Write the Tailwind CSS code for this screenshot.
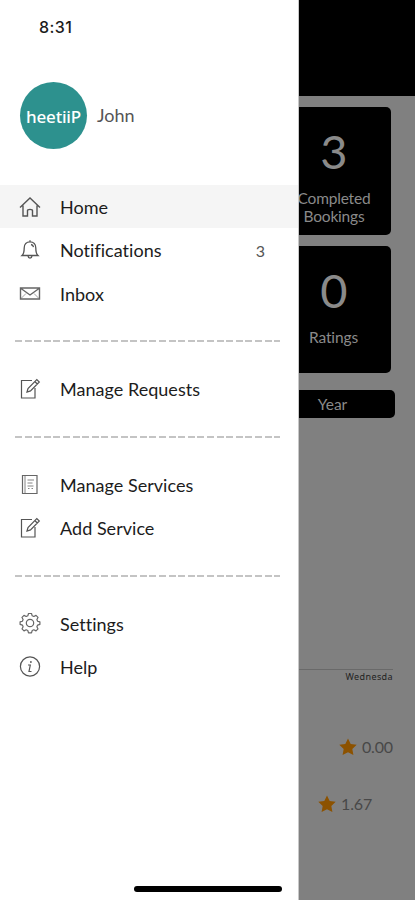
<!DOCTYPE html>
<html lang="en">
<head>
<meta charset="utf-8">
<title>Menu</title>
<script src="https://cdn.jsdelivr.net/npm/@tailwindcss/browser@4"></script>
</head>
<body class="w-[415px] h-[900px] overflow-hidden bg-[#808080] font-['Lato',sans-serif]">
<svg class="hidden">
  <symbol id="edit" viewBox="0 0 22 22"><path d="M13 2.500H2.500V20H16V10M8 14l1-3.500L17.800 1.500l2.500 2.500L11.500 12.900zM8 14l3.500-1.100M15.800 3.500l2.500 2.500"/></symbol>
</svg>
<div class="flex h-full">
  <aside class="w-[299px] shrink-0 h-full bg-white border-r border-[#c8c8c8] flex flex-col relative z-10 text-[#1c1c1c]">
    <div class="h-[54px] pl-[39px] pt-[15px] text-[16px] leading-6 font-medium tracking-[0.4px] font-['Inter',sans-serif]">8:31</div>
    <header class="h-[131px] pt-[29px] pl-[20px] flex items-start gap-[10px]">
      <div class="size-[67px] -mt-px rounded-full bg-[#2d918e] text-white flex items-center justify-center text-[17px] font-['Noto_Sans',sans-serif] font-medium tracking-[-0.2px] pt-[3px]">heetiiP</div>
      <span class="text-[18px] leading-[65px] text-[#555]">John</span>
    </header>
    <nav class="text-[18px] tracking-[0.03px]">
      <a class="h-[43px] pl-[19px] flex items-center gap-[19px] bg-[#f5f5f5]">
        <svg class="size-[22px]" viewBox="0 0 22 22" fill="none" stroke="#555" stroke-width="1.4"><path d="M1 11.500L11 2l10 9.500M4 9.500v10.500h4.500V14.500c0-1.500 5-1.500 5 0v5.500H18V9.500"/></svg>
        <span class="pt-[2px]">Home</span>
      </a>
      <a class="h-[44px] pl-[19px] pr-[33px] flex items-center gap-[19px]">
        <svg class="size-[22px]" viewBox="0 0 22 22" fill="none" stroke="#555" stroke-width="1.3"><path d="M3 16.500h16c-1.700-1.500-2.200-3-2.200-7.500 0-3.700-2.300-6.200-5.800-6.200S5.200 5.300 5.200 9c0 4.500-.5 6-2.200 7.500zM9 17c.3 2.700 3.700 2.700 4 0M11 1.300v1.500M12 5.500c1.500.3 2.300 1.300 2.500 2.700"/></svg>
        <span class="flex-1">Notifications</span><span class="text-[16px] text-[#555] pt-px">3</span>
      </a>
      <a class="h-[43px] pl-[19px] flex items-center gap-[19px]">
        <svg class="size-[22px]" viewBox="0 0 22 22" fill="none" stroke="#666" stroke-width="1.4"><path d="M1.500 5h19v11h-19zM2 5.500l9 6.500 9-6.500"/><path stroke-width=".6" d="M2 15.500l5-5M20 15.500l-5-5"/></svg>
        <span class="pt-px">Inbox</span>
      </a>
      <div class="mt-[25px] ml-[15px] w-[265px] h-[1.500px] bg-[repeating-linear-gradient(90deg,#c4c4c4_0_7px,transparent_7px_9.6px)]"></div>
      <a class="mt-[26px] h-[43px] pl-[19px] flex items-center gap-[19px]">
        <svg class="size-[22px]" fill="none" stroke="#555" stroke-width="1.2"><use href="#edit"/></svg>
        <span>Manage Requests</span>
      </a>
      <div class="mt-[25.500px] ml-[15px] w-[265px] h-[1.500px] bg-[repeating-linear-gradient(90deg,#c4c4c4_0_7px,transparent_7px_9.6px)]"></div>
      <a class="mt-[25.500px] h-[43px] pl-[19px] flex items-center gap-[19px]">
        <svg class="size-[22px]" viewBox="0 0 22 22" fill="none" stroke="#666" stroke-width="1.2"><path d="M3.500 1.500h14.500v18h-14.500z"/><path stroke-width=".8" d="M6 2v17M8.500 6h6.500M8.500 9h5M8.500 12h6M9 14.500h1.500M12.500 14.500h1.500"/></svg>
        <span class="pt-[2px]">Manage Services</span>
      </a>
      <a class="h-[43px] pl-[19px] flex items-center gap-[19px]">
        <svg class="size-[22px]" fill="none" stroke="#555" stroke-width="1.2"><use href="#edit"/></svg>
        <span class="pt-[2px]">Add Service</span>
      </a>
      <div class="mt-[26px] ml-[15px] w-[265px] h-[1.500px] bg-[repeating-linear-gradient(90deg,#c4c4c4_0_7px,transparent_7px_9.6px)]"></div>
      <a class="mt-[25px] h-[43px] pl-[19px] flex items-center gap-[19px]">
        <svg class="size-[22px]" viewBox="0 0 22 22" fill="none" stroke="#666" stroke-width="1.2" stroke-linejoin="round"><path d="M9.500 1.500h3l.7 2.300 1.600.7 2.200-1.100 2 2-1.100 2.200.7 1.600 2.300.7v2.500l-2.300.7-.7 1.600 1.100 2.200-2 2-2.200-1.100-1.600.7-.7 2.300h-3l-.7-2.300-1.600-.7L5 18.900l-2-2 1.100-2.200-.7-1.600-2.300-.7V9.900l2.300-.7.7-1.600L3 5.400l2-2 2.200 1.100 1.600-.7z"/><circle cx="11" cy="11" r="3.700"/></svg>
        <span class="pt-[2px]">Settings</span>
      </a>
      <a class="h-[44px] pl-[19px] flex items-center gap-[19px]">
        <svg class="size-[22px]" viewBox="0 0 22 22" fill="none" stroke="#555" stroke-width="1.2"><circle cx="11" cy="10.500" r="9.600"/><path d="M9 9h2.300L10 15.500h2.500"/><circle cx="11.900" cy="6" r=".9" fill="#555" stroke="none"/></svg>
        <span class="pt-[2px]">Help</span>
      </a>
    </nav>
    <div class="mt-auto mb-[8px] ml-[134px] w-[148px] h-[6px] rounded-full bg-black"></div>
  </aside>
  <main class="flex-1 min-w-0 bg-[#808080] text-[#8a8a8a] flex flex-col">
    <div class="h-[96px] bg-black shrink-0"></div>
    <section class="-ml-[24px] mt-[11px] w-[116px] h-[128px] shrink-0 rounded-[5px] bg-black flex flex-col items-center text-center">
      <div class="mt-[14px] pl-[2px] text-[47px] leading-[60px]">3</div>
      <div class="mt-[8px] pl-[2px] text-[15.500px] leading-[18px] tracking-[-0.2px]"><p>Completed</p><p>Bookings</p></div>
    </section>
    <section class="-ml-[24px] mt-[11px] w-[116px] h-[127px] shrink-0 rounded-[5px] bg-black flex flex-col items-center text-center">
      <div class="mt-[14px] pl-[2px] text-[47px] leading-[60px]">0</div>
      <div class="mt-[8px] pl-px text-[15.500px] leading-[18px] tracking-[-0.1px]">Ratings</div>
    </section>
    <div class="-ml-[29px] mt-[17px] w-[125px] h-[28px] shrink-0 rounded-[5px] bg-black text-center text-[15.500px] leading-[28px]">Year</div>
    <div class="mt-[251px] w-[94px] h-px shrink-0 bg-[#696969]"></div>
    <div class="pt-px w-[94px] text-right text-[9px] leading-3 tracking-[0.4px] text-[#222] font-['Noto_Sans',sans-serif]">Wednesda</div>
    <div class="mt-[53px] ml-[40px] h-[22px] flex items-center gap-[5px] text-[16px] text-[#484848]">
      <svg class="size-[18px]" viewBox="0 0 20 20" fill="#8c5200"><path d="M10 .5l3 6.200 6.700.9-4.900 4.700 1.200 6.700-6-3.300-6 3.300 1.200-6.700L.3 7.600 7 6.700z"/></svg>
      <span class="-mt-px tracking-[-0.2px]">0.00</span>
    </div>
    <div class="mt-[35px] ml-[19px] h-[22px] flex items-center gap-[5px] text-[16px] text-[#484848]">
      <svg class="size-[18px]" viewBox="0 0 20 20" fill="#8c5200"><path d="M10 .5l3 6.200 6.700.9-4.900 4.700 1.200 6.700-6-3.300-6 3.300 1.200-6.700L.3 7.600 7 6.700z"/></svg>
      <span class="-mt-px tracking-[-0.1px]">1.67</span>
    </div>
  </main>
</div>
</body>
</html>
